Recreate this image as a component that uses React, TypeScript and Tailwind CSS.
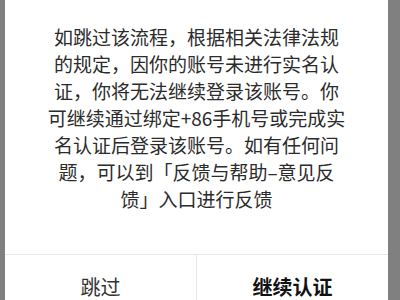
const LINES = [
  '如跳过该流程，根据相关法律法规',
  '的规定，因你的账号未进行实名认',
  '证，你将无法继续登录该账号。你',
  '可继续通过绑定+86手机号或完成实',
  '名认证后登录该账号。如有任何问',
  '题，可以到「反馈与帮助–意见反',
  '馈」入口进行反馈',
];

export default function App() {
  return (
    <div className="flex h-[300px] w-[400px] overflow-hidden bg-[#808080] font-['Noto_Sans_CJK_SC',sans-serif]">
      <div className="w-[5px] shrink-0" />
      <div className="flex w-[383px] shrink-0 flex-col bg-white">
        {/* Message */}
        <div className="pt-[23px] pb-[42px] text-center text-[19px] leading-[27px] text-[#2b2b2b]">
          {LINES.map((line) => (
            <div key={line} className="whitespace-nowrap">
              {line}
            </div>
          ))}
        </div>

        {/* Actions */}
        <div className="flex h-[64px] shrink-0 border-t border-[#e6e6e6]">
          <button className="flex-1 text-[20px] text-[#333333]">跳过</button>
          <div className="w-px bg-[#e6e6e6]" />
          <button className="flex-1 text-[20px] font-bold text-[#111111]">继续认证</button>
        </div>
      </div>
      <div className="flex-1" />
    </div>
  );
}
